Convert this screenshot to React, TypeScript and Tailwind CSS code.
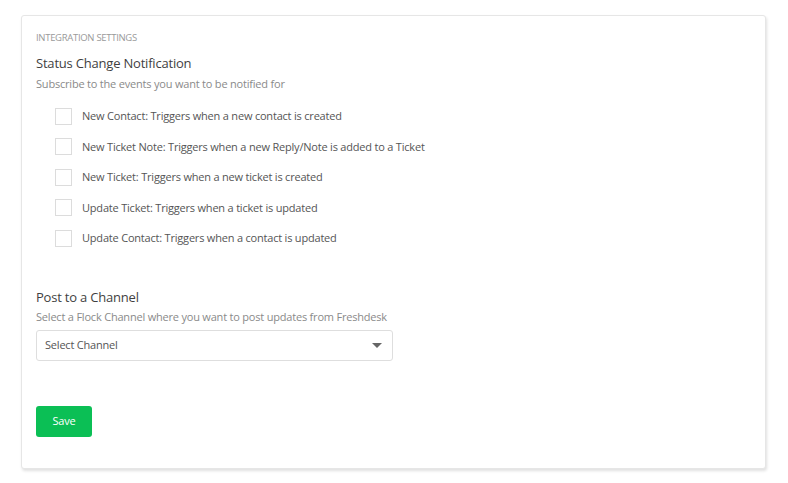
import { useState } from 'react';

const events = [
  'New Contact: Triggers when a new contact is created',
  'New Ticket Note: Triggers when a new Reply/Note is added to a Ticket',
  'New Ticket: Triggers when a new ticket is created',
  'Update Ticket: Triggers when a ticket is updated',
  'Update Contact: Triggers when a contact is updated',
];

export default function App() {
  const [checked, setChecked] = useState<boolean[]>(events.map(() => false));

  return (
    <div className="min-h-[483px] bg-white pt-[15px] pl-[21px] font-['Open_Sans',sans-serif]">
      <div className="w-[745px] h-[454px] rounded-[3px] border border-[#e6e6e6] bg-white shadow-[1px_2px_3px_rgba(0,0,0,0.12)] px-[14px] pt-[15px]">
        <div className="text-[9.5px] uppercase text-[#9a9a9a] leading-[14px] tracking-[-0.3px]">Integration Settings</div>

        <h2 className="mt-[9px] text-[13px] font-medium text-[#3f3f3f] leading-[18px] tracking-[-0.2px]">Status Change Notification</h2>
        <p className="mt-[5px] text-[11px] text-[#8a8a8a] leading-[14px] tracking-[-0.2px]">Subscribe to the events you want to be notified for</p>

        <div className="mt-[17px] ml-[19px] flex flex-col gap-[14.5px]">
          {events.map((label, i) => (
            <label key={label} className="flex items-center cursor-pointer h-[16px]">
              <span
                onClick={() => setChecked(checked.map((c, j) => (j === i ? !c : c)))}
                className="w-[17px] h-[17px] border border-[#dcdcdc] bg-white shrink-0"
              >
                {checked[i] && <span className="block w-full h-full bg-[#0bbf55]" />}
              </span>
              <span className="ml-[10px] text-[11px] text-[#555] leading-[16px] tracking-[-0.2px]">{label}</span>
            </label>
          ))}
        </div>

        <h2 className="mt-[42px] text-[13px] font-medium text-[#3f3f3f] leading-[18px] tracking-[-0.2px]">Post to a Channel</h2>
        <p className="mt-[4px] text-[11px] text-[#8a8a8a] leading-[14px] tracking-[-0.2px]">Select a Flock Channel where you want to post updates from Freshdesk</p>

        <div className="mt-[6px] w-[357px] h-[31px] rounded-[3px] border border-[#dedede] flex items-center justify-between pl-[8px] pr-[10px]">
          <span className="text-[11px] text-[#555] tracking-[-0.2px]">Select Channel</span>
          <svg width="10" height="6" viewBox="0 0 10 6">
            <path d="M0 0 L10 0 L5 5 Z" fill="#666" />
          </svg>
        </div>

        <button className="mt-[45px] w-[56px] h-[31px] rounded-[3px] bg-[#0bbf55] text-white text-[11px] tracking-[-0.2px]">Save</button>
      </div>
    </div>
  );
}
